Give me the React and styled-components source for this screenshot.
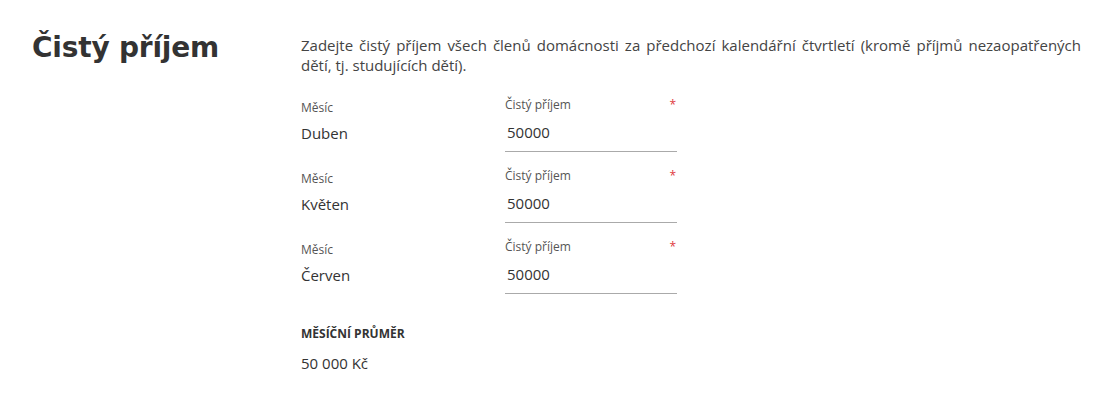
import React from "react";
import styled, { createGlobalStyle } from "styled-components";

const GlobalStyle = createGlobalStyle`
  body {
    margin: 0;
    background: #fff;
    color: #333;
    font-family: "Open Sans", "Noto Sans", sans-serif;
  }
`;

const Page = styled.div`
  display: grid;
  grid-template-columns: 269px 1fr;
  padding: 26px 31px 0 32px;
`;

const Title = styled.h1`
  margin: 0;
  font-family: "DejaVu Sans", Verdana, sans-serif;
  font-weight: bold;
  font-size: 28px;
  line-height: 44px;
  color: #333;
  letter-spacing: -0.2px;
`;

const Content = styled.div`
  padding-top: 9px;
`;

const Intro = styled.p`
  margin: 0 0 22px;
  font-size: 15px;
  line-height: 20px;
  text-align: justify;
  color: #444;
`;

const Row = styled.div`
  display: grid;
  grid-template-columns: 204px 172px;
  margin-bottom: 16px;
`;

const MonthCell = styled.div`
  padding-top: 3px;
`;

const SmallLabel = styled.div`
  font-size: 12px;
  line-height: 16px;
  color: #555;
`;

const MonthValue = styled.div`
  margin-top: 6px;
  font-size: 15px;
  line-height: 22px;
  color: #333;
`;

const Field = styled.div`
  border-bottom: 1px solid #aaa;
`;

const FieldHead = styled.div`
  display: flex;
  justify-content: space-between;
  padding-right: 1px;
`;

const Required = styled.span`
  color: #e0393e;
  font-size: 12px;
  line-height: 16px;
`;

const Input = styled.input`
  display: block;
  box-sizing: border-box;
  width: 100%;
  height: 38px;
  padding: 0 2px;
  border: 0;
  outline: none;
  background: transparent;
  font-family: inherit;
  font-size: 15px;
  color: #333;
`;

const Summary = styled.div`
  margin-top: 32px;
`;

const SummaryLabel = styled.div`
  font-size: 12px;
  font-weight: bold;
  line-height: 16px;
  color: #333;
`;

const SummaryValue = styled.div`
  margin-top: 11px;
  font-size: 15px;
  line-height: 20px;
  color: #333;
`;

const months = ["Duben", "Květen", "Červen"];

const App = () => {
  return (
    <>
      <GlobalStyle />
      <Page>
        <Title>Čistý příjem</Title>
        <Content>
          <Intro>
            Zadejte čistý příjem všech členů domácnosti za předchozí
            kalendářní čtvrtletí (kromě příjmů nezaopatřených dětí, tj.
            studujících dětí).
          </Intro>
          {months.map((m) => (
            <Row key={m}>
              <MonthCell>
                <SmallLabel>Měsíc</SmallLabel>
                <MonthValue>{m}</MonthValue>
              </MonthCell>
              <Field>
                <FieldHead>
                  <SmallLabel>Čistý příjem</SmallLabel>
                  <Required>*</Required>
                </FieldHead>
                <Input defaultValue="50000" />
              </Field>
            </Row>
          ))}
          <Summary>
            <SummaryLabel>MĚSÍČNÍ PRŮMĚR</SummaryLabel>
            <SummaryValue>50 000 Kč</SummaryValue>
          </Summary>
        </Content>
      </Page>
    </>
  );
};

export default App;
